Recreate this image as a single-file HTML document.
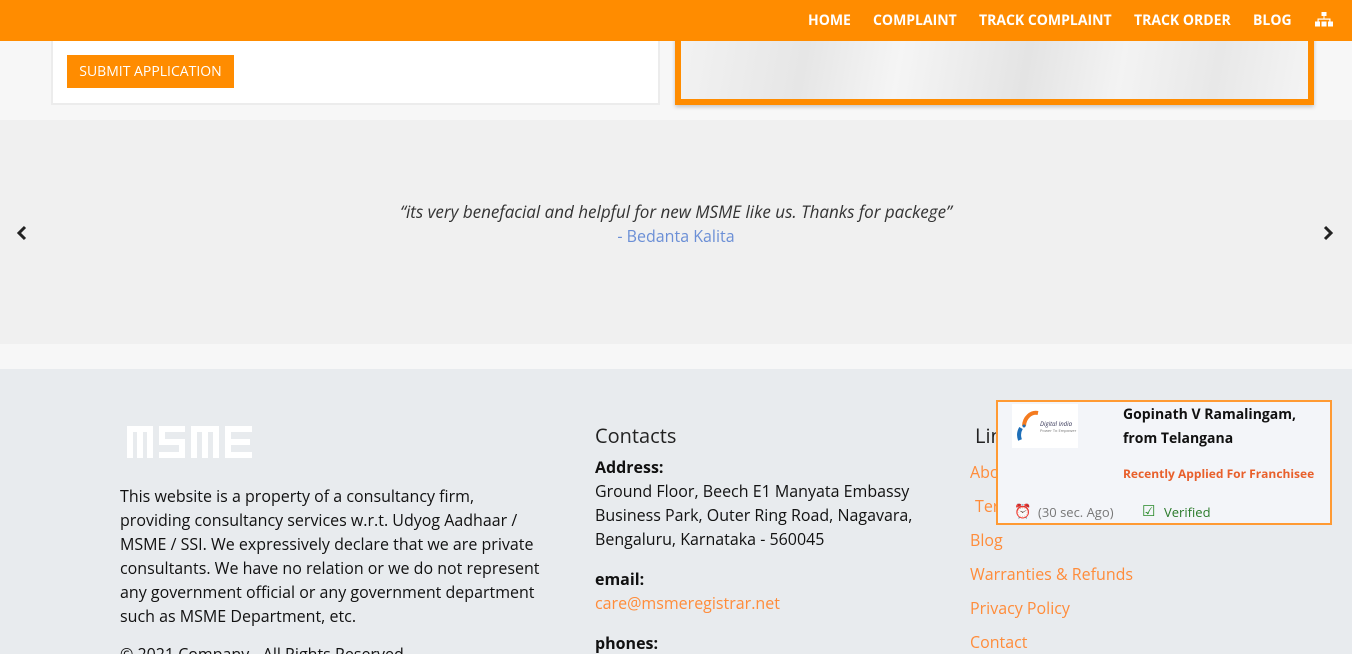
<!DOCTYPE html>
<html><head><meta charset="utf-8"><style>
*{margin:0;padding:0;box-sizing:border-box}
html,body{width:1352px;height:654px;overflow:hidden}
body{font-family:"Open Sans","Liberation Sans",sans-serif;background:#e8ebee;position:relative}
.a{position:absolute}
.nav{left:0;top:0;width:1352px;height:41px;background:#ff8c00}
.nav span{position:absolute;top:11px;color:#fff;font-weight:bold;font-size:14px}
.lk{color:#ff8c3a;font-size:16px}
.p{font-size:16px;color:#111;line-height:24px}
</style></head><body>
<div class="a" style="left:0;top:41px;width:1352px;height:79px;background:#f7f7f7"></div>
<div class="a" style="left:51px;top:35px;width:609px;height:70px;background:#fff;border:2px solid #ececec"></div>
<div class="a" style="left:67px;top:55px;width:167px;height:33px;background:#ff8c00;color:#fff;font-size:14px;text-align:center;line-height:34px">SUBMIT APPLICATION</div>
<div class="a" style="left:675px;top:35px;width:639px;height:70px;background:linear-gradient(100deg,#f2f2f2,#e6e6e6 20%,#f5f5f5 35%,#e4e4e4 55%,#f3f3f3 70%,#e8e8e8 85%,#f4f4f4);border:6px solid #ff8c00;border-top:0;box-shadow:0 2px 4px rgba(0,0,0,.2)"></div>
<div class="a nav">
<span style="left:808px">HOME</span><span style="left:873px">COMPLAINT</span><span style="left:979px">TRACK COMPLAINT</span><span style="left:1134px">TRACK ORDER</span><span style="left:1253px">BLOG</span>
<svg style="position:absolute;left:1315px;top:12px" width="18" height="15" viewBox="0 0 18 15" fill="#fff"><rect x="6.5" y="0" width="5" height="4"/><rect x="8.5" y="4" width="1" height="3"/><rect x="2.5" y="6.5" width="13" height="1.2"/><rect x="2.5" y="6.5" width="1.2" height="3"/><rect x="14.3" y="6.5" width="1.2" height="3"/><rect x="0" y="9.5" width="5" height="5"/><rect x="6.5" y="9.5" width="5" height="5"/><rect x="13" y="9.5" width="5" height="5"/></svg>
</div>
<div class="a" style="left:0;top:120px;width:1352px;height:224px;background:#f0f0f0"></div>
<div class="a" style="left:0;top:344px;width:1352px;height:25px;background:#f7f7f7"></div>
<div class="a" style="left:0;top:200px;width:1352px;text-align:center;font-style:italic;font-size:17px;color:#333">“its very benefacial and helpful for new MSME like us. Thanks for packege”</div>
<div class="a" style="left:0;top:225px;width:1352px;text-align:center;font-size:16px;color:#6b8fd6">- Bedanta Kalita</div>
<svg class="a" style="left:16px;top:225px" width="12" height="16" viewBox="0 0 12 16"><path d="M9 2 L3 8 L9 14" stroke="#222" stroke-width="3" fill="none"/></svg>
<svg class="a" style="left:1322px;top:225px" width="12" height="16" viewBox="0 0 12 16"><path d="M3 2 L9 8 L3 14" stroke="#222" stroke-width="3" fill="none"/></svg>
<svg class="a" style="left:127px;top:426px" width="127" height="32" viewBox="0 0 127 32" fill="#fff">
<rect x="0" y="0" width="6" height="32"/><rect x="0" y="0" width="26" height="6"/><rect x="10" y="0" width="6" height="32"/><rect x="20" y="0" width="6" height="32"/>
<rect x="32" y="0" width="26" height="6"/><rect x="32" y="0" width="6" height="18"/><rect x="32" y="13" width="26" height="6"/><rect x="52" y="13" width="6" height="19"/><rect x="32" y="26" width="26" height="6"/>
<rect x="64" y="0" width="6" height="32"/><rect x="64" y="0" width="28" height="6"/><rect x="75" y="0" width="6" height="32"/><rect x="86" y="0" width="6" height="32"/>
<rect x="98" y="0" width="6" height="32"/><rect x="98" y="0" width="27" height="6"/><rect x="98" y="13" width="25" height="6"/><rect x="98" y="26" width="27" height="6"/>
</svg>
<div class="a p" style="left:120px;top:484px;width:428px">This website is a property of a consultancy firm, providing consultancy services w.r.t. Udyog Aadhaar / MSME / SSI. We expressively declare that we are private consultants. We have no relation or we do not represent any government official or any government department such as MSME Department, etc.</div>
<div class="a p" style="left:120px;top:642px">© 2021 Company - All Rights Reserved</div>
<div class="a" style="left:595px;top:422px;font-size:20px;color:#222">Contacts</div>
<div class="a p" style="left:595px;top:455px"><b>Address:</b><br>Ground Floor, Beech E1 Manyata Embassy<br>Business Park, Outer Ring Road, Nagavara,<br>Bengaluru, Karnataka - 560045</div>
<div class="a p" style="left:595px;top:567px"><b>email:</b><br><span class="lk">care@msmeregistrar.net</span></div>
<div class="a p" style="left:595px;top:631px"><b>phones:</b></div>
<div class="a" style="left:975px;top:422px;font-size:20px;color:#222">Links</div>
<div class="a lk" style="left:970px;top:461px">About Us</div>
<div class="a lk" style="left:975px;top:495px">Terms</div>
<div class="a lk" style="left:970px;top:529px">Blog</div>
<div class="a lk" style="left:970px;top:563px">Warranties &amp; Refunds</div>
<div class="a lk" style="left:970px;top:597px">Privacy Policy</div>
<div class="a lk" style="left:970px;top:631px">Contact</div>
<div class="a" style="left:996px;top:400px;width:336px;height:125px;background:#f3f5f9;border:2px solid #ff9a33">
<div class="a" style="left:14px;top:2px;width:66px;height:44px;background:#fff">
<svg width="66" height="44"><path d="M12 22 A12 14 0 0 1 26 9" stroke="#f47b20" stroke-width="4" fill="none"/><path d="M8 36 A14 14 0 0 1 9 24" stroke="#1e6fb8" stroke-width="4" fill="none"/><circle cx="12" cy="22" r="1.5" fill="#1e6fb8"/><text x="28" y="22" font-size="6" fill="#335" font-style="italic">Digital India</text><text x="28" y="28" font-size="4" fill="#777">Power To Empower</text></svg></div>
<div class="a" style="left:125px;top:1px;font-size:14px;font-weight:bold;color:#111;line-height:24px">Gopinath V Ramalingam,<br>from Telangana</div>
<div class="a" style="left:125px;top:63px;font-size:12px;font-weight:bold;color:#e8602c">Recently Applied For Franchisee</div>
<div class="a" style="left:16px;top:100px;font-size:14px;color:#d33">⏰</div>
<div class="a" style="left:40px;top:101px;font-size:13px;color:#777">(30 sec. Ago)</div>
<div class="a" style="left:144px;top:99px;font-size:15px;color:#2a8a2a">☑</div>
<div class="a" style="left:166px;top:101px;font-size:13px;color:#2a7a2a">Verified</div>
</div>
</body></html>
